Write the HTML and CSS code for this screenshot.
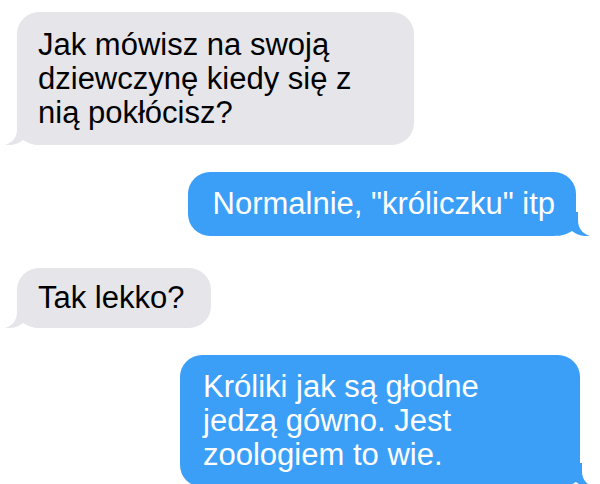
FILE: index.html
```html
<!DOCTYPE html>
<html lang="pl">
<head>
<meta charset="utf-8">
<title>Rozmowa</title>
<link rel="stylesheet" href="styles.css">
</head>
<body>
<div class="chat">

<div class="msg in wide">
Jak mówisz na swoją dziewczynę kiedy się z nią pokłócisz?
<svg class="tail" width="32" height="24" viewBox="0 0 32 24"><path d="M12,0 L12,8 Q12,20 0,24 Q10,25 18,19 Q24,23 32,24 L32,0 Z"/></svg>
</div>

<div class="msg out first">
Normalnie, "króliczku" itp
<svg class="tail" width="32" height="24" viewBox="0 0 32 24"><path d="M12,0 L12,8 Q12,20 0,24 Q10,25 18,19 Q24,23 32,24 L32,0 Z"/></svg>
</div>

<div class="msg in short">
Tak lekko?
<svg class="tail" width="32" height="24" viewBox="0 0 32 24"><path d="M12,0 L12,8 Q12,20 0,24 Q10,25 18,19 Q24,23 32,24 L32,0 Z"/></svg>
</div>

<div class="msg out long">
Króliki jak są głodne jedzą gówno. Jest zoologiem to wie.
<svg class="tail" width="32" height="24" viewBox="0 0 32 24"><path d="M12,0 L12,8 Q12,20 0,24 Q10,25 18,19 Q24,23 32,24 L32,0 Z"/></svg>
</div>

</div>
</body>
</html>
```

FILE: styles.css
```css
body {
	margin: 0;
	background: #fff;
	font-family: "Liberation Sans", Arial, sans-serif;
}
.chat {
	display: flex;
	flex-direction: column;
	gap: 27px;
	padding: 12px 0 0 0;
}
.msg {
	position: relative;
	font-size: 31px;
	line-height: 34px;
	padding: 15px 21px;
	border-radius: 22px;
}
.msg .tail {
	position: absolute;
	bottom: 0;
}
.in {
	align-self: flex-start;
	margin-left: 17px;
	background: #e5e5ea;
	color: #000;
}
.in .tail {
	left: -12px;
	fill: #e5e5ea;
}
.out {
	align-self: flex-end;
	background: #3b9ff8;
	color: #fff;
}
.out .tail {
	right: -14px;
	fill: #3b9ff8;
	transform: scaleX(-1);
}
.wide {
	width: 330px;
	padding-top: 16px;
	padding-right: 46px;
}
.first {
	margin-right: 24px;
	padding-left: 25px;
}
.short {
	margin-top: 5px;
	padding-top: 13px;
	padding-bottom: 13px;
	padding-right: 27px;
}
.long {
	margin-right: 20px;
	width: 300px;
	padding-left: 23px;
	padding-right: 77px;
}
```
